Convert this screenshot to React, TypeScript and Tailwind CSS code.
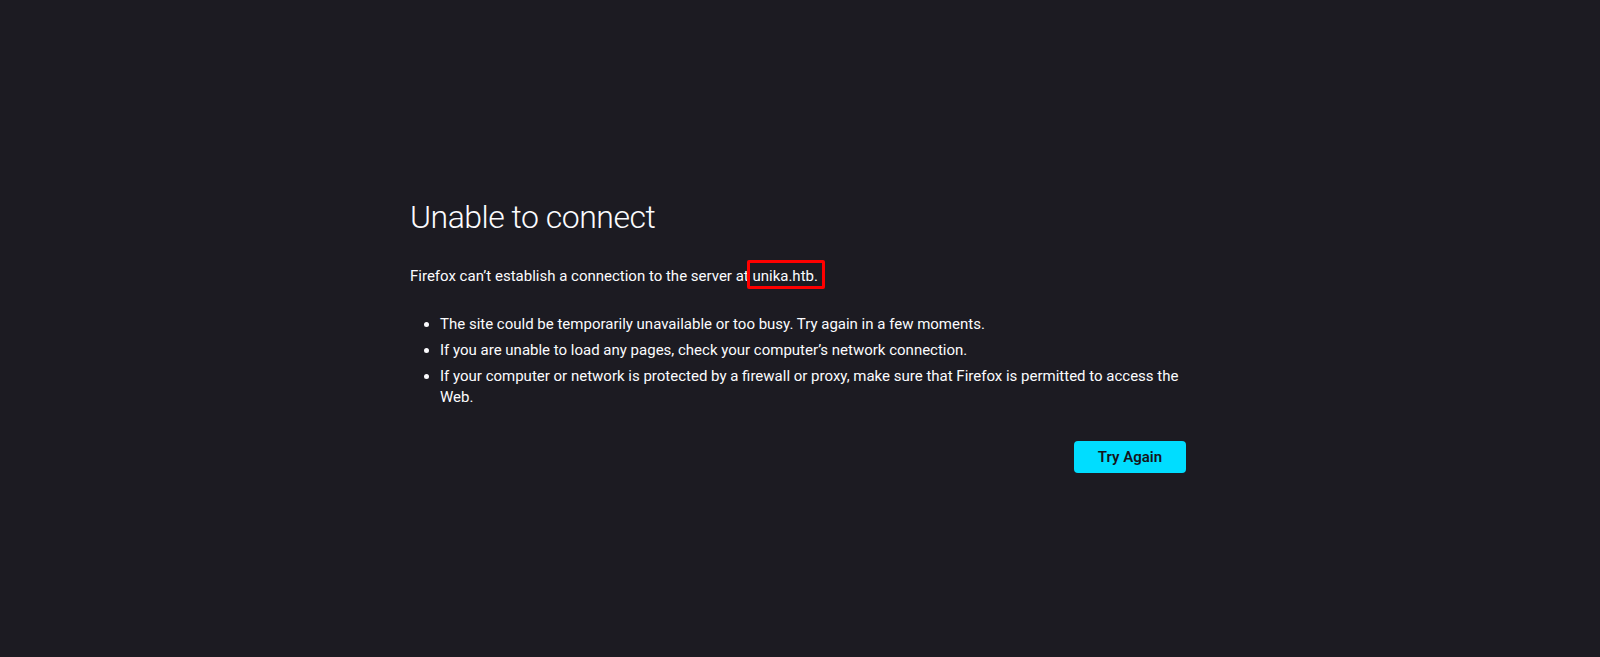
export default function App() {
  return (
    <div className="min-h-screen w-full bg-[#1c1b22] text-[#fbfbfe] font-['Roboto',sans-serif]">
      <div className="mx-auto w-[780px] pt-[197px]">
        <h1 className="text-[32px] leading-[40px] font-light tracking-[-0.5px] text-[#fbfbfe]">
          Unable to connect
        </h1>
        <p className="mt-[29px] text-[15px] leading-[21px]">
          Firefox can’t establish a connection to the server at{" "}
          <span className="relative">
            unika.htb.
            <span className="absolute left-[-5px] right-[-7px] top-[-7px] bottom-[-4px] rounded-[2px] border-[3px] border-[#ff0000] pointer-events-none" />
          </span>
        </p>
        <ul className="mt-[27px] list-disc pl-[30px] text-[15px] leading-[21px] flex flex-col gap-[5px]">
          <li>The site could be temporarily unavailable or too busy. Try again in a few moments.</li>
          <li>If you are unable to load any pages, check your computer’s network connection.</li>
          <li>
            If your computer or network is protected by a firewall or proxy, make sure that Firefox is permitted to access the
            <br />
            Web.
          </li>
        </ul>
        <div className="mt-[33px] pr-[4px] flex justify-end">
          <button className="w-[112px] h-[32px] rounded-[4px] bg-[#00ddff] text-[#15141a] text-[15px] font-semibold">
            Try Again
          </button>
        </div>
      </div>
    </div>
  );
}
